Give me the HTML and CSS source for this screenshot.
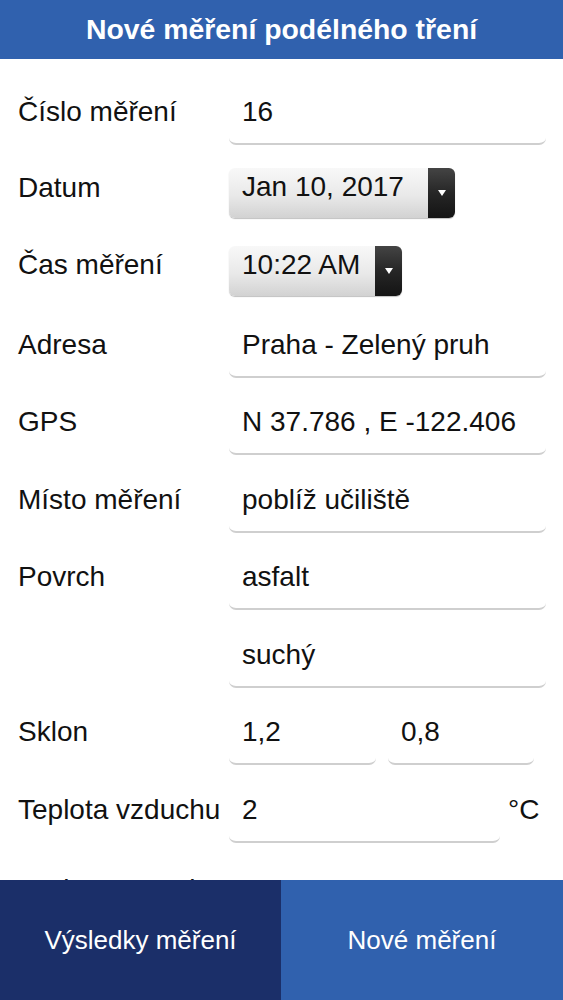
FILE: index.html
```html
<!DOCTYPE html>
<html>
  <head>
    <meta charset="utf-8" />
    <title>Nové měření podélného tření</title>
    <link rel="stylesheet" href="styles.css">
  </head>
  <body>
    <div class="header">Nové měření podélného tření</div>

    <div class="form">
      <div class="row">
        <label class="label" for="cislo">Číslo měření</label>
        <input class="field" type="text" id="cislo" value="16" />
      </div>
      <div class="row">
        <label class="label label-picker">Datum</label>
        <div class="picker picker-date">
          <span class="picker-value">Jan 10, 2017</span>
          <span class="picker-btn"><span class="arrow"></span></span>
        </div>
      </div>
      <div class="row">
        <label class="label label-picker">Čas měření</label>
        <div class="picker picker-time">
          <span class="picker-value">10:22 AM</span>
          <span class="picker-btn"><span class="arrow"></span></span>
        </div>
      </div>
      <div class="row">
        <label class="label" for="adresa">Adresa</label>
        <input class="field" type="text" id="adresa" value="Praha - Zelený pruh" />
      </div>
      <div class="row">
        <label class="label" for="gps">GPS</label>
        <input class="field" type="text" id="gps" value="N 37.786 , E -122.406" />
      </div>
      <div class="row">
        <label class="label" for="misto">Místo měření</label>
        <input class="field" type="text" id="misto" value="poblíž učiliště" />
      </div>
      <div class="row">
        <label class="label" for="povrch">Povrch</label>
        <input class="field" type="text" id="povrch" value="asfalt" />
      </div>
      <div class="row">
        <span class="label"></span>
        <input class="field" type="text" id="stav" value="suchý" />
      </div>
      <div class="row">
        <label class="label" for="sklon1">Sklon</label>
        <div class="pair">
          <input class="field" type="text" id="sklon1" value="1,2" />
          <input class="field" type="text" id="sklon2" value="0,8" />
        </div>
      </div>
      <div class="row">
        <label class="label" for="vzduch">Teplota vzduchu</label>
        <div class="with-unit">
          <input class="field" type="text" id="vzduch" value="2" />
          <span class="unit">°C</span>
        </div>
      </div>
      <div class="row row-last">
        <label class="label" for="vozovka">Teplota vozovky</label>
        <div class="with-unit">
          <input class="field" type="text" id="vozovka" value="1" />
          <span class="unit">°C</span>
        </div>
      </div>
    </div>

    <div class="footer">
      <button class="tab tab-results">Výsledky měření</button>
      <button class="tab tab-new">Nové měření</button>
    </div>
  </body>
</html>
```

FILE: styles.css
```css
body {
  margin: 0;
  font-family: "Liberation Sans", Arial, sans-serif;
  color: #111;
  background: #fff;
}
.header {
  height: 59px;
  line-height: 59px;
  background-color: #3061ae;
  color: #fff;
  font-size: 28.4px;
  font-weight: bold;
  text-align: center;
}
.form {
  display: flex;
  flex-direction: column;
  gap: 17.5px;
  padding: 26px 17px 140px 18px;
}
.row {
  display: grid;
  grid-template-columns: 211px 1fr;
  align-items: start;
  height: 60px;
}
.row-last {
  margin-top: 3px;
}
.label {
  font-size: 28px;
  line-height: 32px;
  padding-top: 11px;
  white-space: nowrap;
}
.label-picker {
  padding-top: 9px;
}
.field {
  box-sizing: border-box;
  width: 100%;
  height: 60px;
  margin: 0;
  padding: 11px 13px 15px;
  border: none;
  border-bottom: 2px solid #cfcfcf;
  border-radius: 7px;
  font-family: inherit;
  font-size: 28px;
  line-height: 32px;
  color: #111;
  background: #fff;
  outline: none;
}
.picker {
  display: flex;
  height: 50px;
  margin-top: 5.5px;
  border-radius: 6px;
  box-shadow: 0 1px 1px rgba(0, 0, 0, 0.25);
}
.picker-date {
  width: 226px;
}
.picker-time {
  width: 173px;
}
.picker-value {
  flex: 1;
  box-sizing: border-box;
  padding: 3px 0 0 13px;
  font-size: 28px;
  line-height: 32px;
  white-space: nowrap;
  border-radius: 6px 0 0 6px;
  background: linear-gradient(#f8f8f8, #e9e9e9 55%, #d2d2d2);
}
.picker-btn {
  width: 27px;
  display: flex;
  align-items: center;
  justify-content: center;
  border-radius: 0 6px 6px 0;
  background: linear-gradient(#444, #262626 50%, #141414);
}
.arrow {
  width: 0;
  height: 0;
  border-left: 4px solid transparent;
  border-right: 4px solid transparent;
  border-top: 6px solid #fff;
}
.pair {
  display: grid;
  grid-template-columns: 147px 146px;
  gap: 12px;
}
.with-unit {
  display: flex;
  align-items: start;
}
.with-unit .field {
  width: 271px;
}
.unit {
  margin-left: 8px;
  padding-top: 11px;
  font-size: 28px;
  line-height: 32px;
}
.footer {
  position: fixed;
  left: 0;
  right: 0;
  bottom: 0;
  height: 120px;
  display: grid;
  grid-template-columns: 281px 1fr;
}
.tab {
  border: none;
  margin: 0;
  padding: 0;
  color: #fff;
  font-family: inherit;
  font-size: 26px;
  cursor: pointer;
}
.tab-results {
  background-color: #1b2f69;
}
.tab-new {
  background-color: #3061ae;
}
```
